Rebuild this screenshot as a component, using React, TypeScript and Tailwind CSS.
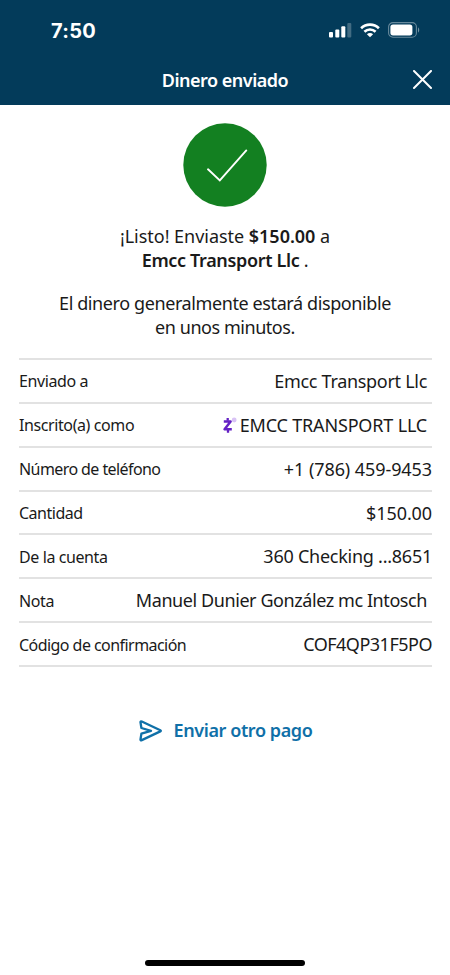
import type { ReactNode } from "react";

interface Detail {
  label: string;
  value: ReactNode;
  labelClass: string;
  valueClass: string;
}

const details: Detail[] = [
  {
    label: "Enviado a",
    value: "Emcc Transport Llc",
    labelClass: "tracking-[-0.4px]",
    valueClass: "pr-[5px] tracking-[-0.3px]",
  },
  {
    label: "Inscrito(a) como",
    value: "EMCC TRANSPORT LLC",
    labelClass: "tracking-[-0.4px]",
    valueClass: "pr-[5px] tracking-[-0.17px]",
  },
  {
    label: "Número de teléfono",
    value: "+1 (786) 459-9453",
    labelClass: "tracking-[-0.58px]",
    valueClass: "tracking-[-0.08px]",
  },
  { label: "Cantidad", value: "$150.00", labelClass: "tracking-[-0.5px]", valueClass: "tracking-[-0.1px]" },
  { label: "De la cuenta", value: "360 Checking ...8651", labelClass: "tracking-[-0.4px]", valueClass: "tracking-[-0.25px]" },
  {
    label: "Nota",
    value: "Manuel Dunier González mc Intosch",
    labelClass: "tracking-[-0.4px]",
    valueClass: "pr-[5px] tracking-[-0.42px]",
  },
  {
    label: "Código de confirmación",
    value: "COF4QP31F5PO",
    labelClass: "tracking-[-0.55px]",
    valueClass: "tracking-[-0.5px]",
  },
];

function SignalIcon() {
  return (
    <svg width="23" height="15" viewBox="0 0 23 15" fill="#fff">
      <rect x="0" y="9" width="4" height="5.5" rx="1" />
      <rect x="6.3" y="6.5" width="4" height="8" rx="1" />
      <rect x="12.3" y="3.2" width="4" height="11.3" rx="1" />
      <rect x="18.3" y="0" width="4" height="14.5" rx="1" opacity="0.25" />
    </svg>
  );
}

function WifiIcon() {
  return (
    <svg width="20" height="15" viewBox="0 0 20 15" fill="none" stroke="#fff" strokeWidth="2.6">
      <path d="M1.1 5.2C6 .4 14 .4 18.9 5.2" />
      <path d="M4.4 8.7c3.2-3 8-3 11.2 0" />
      <path d="M10 14.3l-3.1-3.1c1.7-1.6 4.5-1.6 6.2 0z" fill="#fff" stroke="none" />
    </svg>
  );
}

function BatteryIcon() {
  return (
    <svg width="32" height="16" viewBox="0 0 32 16" fill="none">
      <rect x="0.6" y="0.6" width="27.8" height="14.6" rx="4.3" stroke="#fff" strokeOpacity="0.4" strokeWidth="1.1" />
      <rect x="2.4" y="2.4" width="22" height="11" rx="2.6" fill="#fff" />
      <path d="M30 5.4c1.6.6 1.6 4.4 0 5z" fill="#fff" fillOpacity="0.45" />
    </svg>
  );
}

function ZelleIcon() {
  return (
    <svg width="14" height="17" viewBox="0 0 14 17" fill="none">
      <path d="M.8 4.4h6.8L1.6 12.2h7.2" stroke="#6421c4" strokeWidth="2.5" strokeLinejoin="round" />
      <path d="M4.7 1v2.8M5 12.6v3.2" stroke="#6421c4" strokeWidth="2.3" />
      <circle cx="11.2" cy="3" r="2.4" fill="#d9c3f5" />
    </svg>
  );
}

function SendIcon() {
  return (
    <svg
      width="24"
      height="22"
      viewBox="0 0 24 22"
      fill="none"
      stroke="#0f70a8"
      strokeWidth="2.3"
      strokeLinecap="round"
      strokeLinejoin="round"
    >
      <path d="M1.5 2.3Q1.3.9 2.8 1.5L21.3 10.2Q22.4 10.8 21.3 11.4L2.8 20.1Q1.3 20.7 1.5 19.3L2.4 13.6 12 10.8 2.4 8z" />
    </svg>
  );
}

export default function App() {
  return (
    <main className="flex h-[975px] w-[450px] flex-col bg-white font-['Noto_Sans',sans-serif] text-[#1a1a1a]">
      <header className="flex h-[105px] flex-col bg-[#033b5a] text-white">
        <div className="flex h-[60px] items-center justify-between pr-[30px] pl-[51px]">
          <span className="pt-[2px] font-['Inter',sans-serif] text-[20px] font-bold tracking-[0.3px]">7:50</span>
          <div className="flex items-center gap-[8px]">
            <SignalIcon />
            <WifiIcon />
            <BatteryIcon />
          </div>
        </div>

        <div className="grid h-10 grid-cols-[40px_1fr_40px] items-center pr-[7px] pl-[7px]">
          <h1 className="col-start-2 text-center text-[18px] font-semibold tracking-[-0.5px]">Dinero enviado</h1>
          <button className="flex justify-center" aria-label="Cerrar">
            <svg width="20" height="20" viewBox="0 0 20 20" stroke="#fff" strokeWidth="2" strokeLinecap="round">
              <path d="M1 1l17 17M18 1l-17 17" />
            </svg>
          </button>
        </div>
      </header>

      <section className="flex flex-col items-center pt-[18px] text-[18px] leading-6">
        <svg width="84" height="84" viewBox="0 0 84 84" fill="none">
          <circle cx="42" cy="42" r="41.7" fill="#138021" />
          <path d="M25 46.3l11.8 11.2L63.3 27.4" stroke="#fff" strokeWidth="1.9" strokeLinecap="round" />
        </svg>

        <p className="mt-[17px] whitespace-nowrap tracking-[-0.03px]">
          ¡Listo! Enviaste <b className="font-semibold">$150.00</b> a
        </p>
        <p className="whitespace-nowrap tracking-[-0.34px]">
          <b className="font-semibold">Emcc Transport Llc</b> .
        </p>

        <p className="mt-[19px] whitespace-nowrap tracking-[-0.4px]">El dinero generalmente estará disponible</p>
        <p className="whitespace-nowrap tracking-[-0.45px]">en unos minutos.</p>
      </section>

      <dl className="mr-[18px] ml-[19px] mt-[19px] border-t-2 border-[#e2e2e2]">
        {details.map(({ label, value, labelClass, valueClass }) => (
          <div
            key={label}
            className="flex h-[43.86px] items-center justify-between border-b-2 border-[#e2e2e2] pt-px whitespace-nowrap"
          >
            <dt className={`text-[16px] ${labelClass}`}>{label}</dt>
            <dd className={`flex items-center gap-[3px] text-[18px] ${valueClass}`}>
              {label === "Inscrito(a) como" && <ZelleIcon />}
              {value}
            </dd>
          </div>
        ))}
      </dl>

      <button className="mt-[50px] ml-px flex items-center justify-center gap-[11px] text-[18px] font-semibold whitespace-nowrap text-[#0f70a8]">
        <SendIcon />
        <span className="tracking-[-0.4px]">Enviar otro pago</span>
      </button>

      <div className="mx-auto mt-auto mb-[9px] h-[6px] w-[160px] rounded-full bg-black" />
    </main>
  );
}
